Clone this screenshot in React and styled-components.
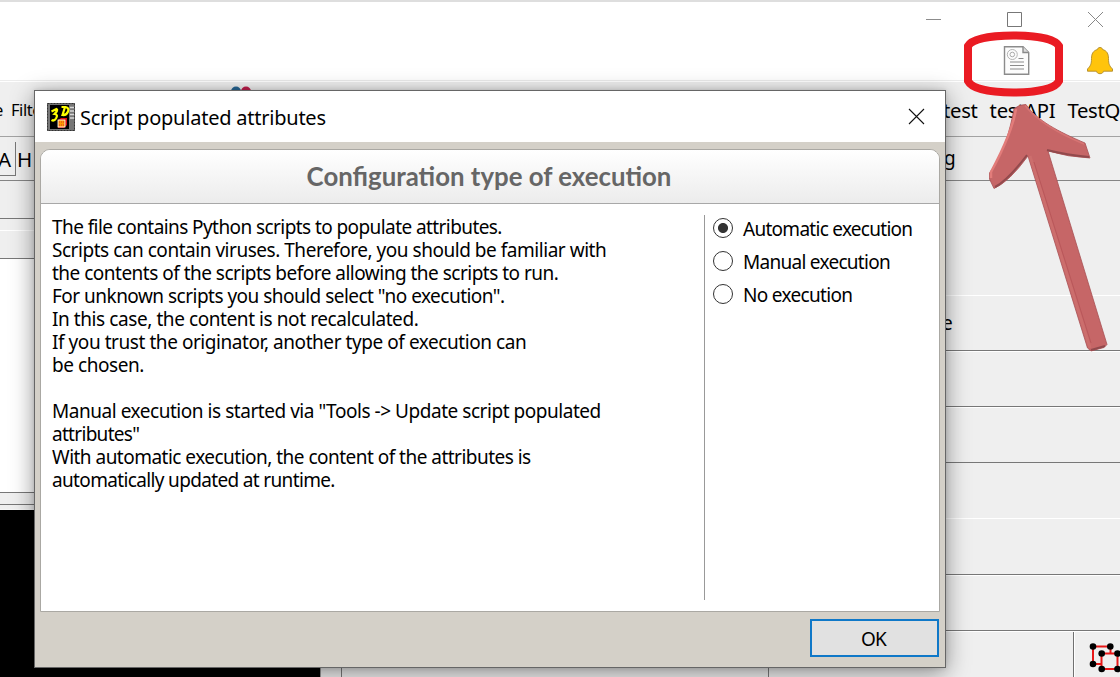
import React from "react";
import styled, { createGlobalStyle } from "styled-components";

const Global = createGlobalStyle`
  * { box-sizing: border-box; }
  html, body { margin: 0; background: #fff; overflow: hidden; }
  body { font-family: "Noto Sans", sans-serif; color: #000; }
`;

const Desktop = styled.main`
  position: relative;
  width: 1120px;
  height: 677px;
  overflow: hidden;
  display: flex;
  flex-direction: column;
  background: #efefef;
`;

const TopBar = styled.header`
  flex: 0 0 81px;
  background: #fff;
  border-top: 2px solid #dedede;
  border-bottom: 1px solid #ececec;
  display: flex;
  flex-direction: column;
`;

const Controls = styled.div`
  height: 36px;
  padding: 9px 16px 0 0;
  display: flex;
  justify-content: flex-end;
  gap: 64px;
`;

const Tools = styled.div`
  display: flex;
  justify-content: flex-end;
  align-items: flex-start;
  gap: 56px;
  padding: 7px 6px 0 0;
`;

const MenuBar = styled.nav`
  flex: 0 0 56px;
  border-top: 1px solid #fff;
  border-bottom: 1px solid #a3a3a3;
  display: flex;
  justify-content: space-between;
  overflow: hidden;
`;

const MenuSide = styled.div`
  width: ${(p) => p.$w}px;
  display: flex;
  gap: ${(p) => p.$gap}px;
  font-size: ${(p) => p.$size}px;
  letter-spacing: ${(p) => p.$track}px;
  line-height: 28px;
  padding-top: ${(p) => p.$top}px;
  margin-left: ${(p) => p.$shift || 0}px;
  white-space: nowrap;
  overflow: visible;
`;

const ToolRow = styled.div`
  flex: 0 0 44px;
  border-bottom: 1px solid #858585;
  display: flex;
  justify-content: space-between;
  font-size: 20.5px;
`;

const StyleKeys = styled.div`
  display: flex;
  padding-top: 5px;
  line-height: 34px;
`;

const Key = styled.span`
  width: 16px;
  height: 34px;
  padding-left: ${(p) => (p.$boxed ? 0 : 1)}px;
  text-indent: ${(p) => (p.$boxed ? -2 : 0)}px;
  border-right: ${(p) => (p.$boxed ? "1px solid #777" : "0")};
  border-bottom: ${(p) => (p.$boxed ? "1px solid #777" : "0")};
`;

const ToolTail = styled.div`
  width: 176px;
  line-height: 43px;
  font-size: 19px;
`;

const Workspace = styled.div`
  flex: 1;
  display: grid;
  grid-template-columns: 320px 465px 1fr;
`;

const Column = styled.div`
  display: flex;
  flex-direction: column;
`;

const Strip = styled.div`
  flex: 0 0 ${(p) => p.$h}px;
  background: ${(p) => p.$bg || "transparent"};
  border-bottom: 1px solid ${(p) => p.$line || "#777"};
  ${(p) => p.$glint && "border-top: 1px solid #fff;"}
  padding-left: 157px;
  font-size: 19px;
  line-height: 54px;
`;

const Viewport = styled.div`
  flex: 1;
  background: #000;
`;

const Gutter = styled.div`
  border-left: 1px solid #999;
  display: grid;
  grid-template-columns: 21px 427px 1fr;
  & > * { border-right: 1px solid #7b7b7b; }
`;

const Footer = styled.div`
  flex: 1;
  display: grid;
  grid-template-columns: 289px 1fr;
  border-top: 1px solid #fff;
  & > :first-child { border-right: 1px solid #707070; }
`;

const NodeCell = styled.div`
  padding: 10px 0 0 14px;
  overflow: hidden;
  border-left: 1px solid #fff;
`;

const Dialog = styled.section`
  position: absolute;
  left: 34px;
  top: 90px;
  width: 912px;
  height: 578px;
  border: 1px solid #666;
  background: #d4d0c8;
  box-shadow: 0 5px 22px rgba(0, 0, 0, 0.42), 0 0 5px rgba(0, 0, 0, 0.12);
  display: flex;
  flex-direction: column;
`;

const DialogTitle = styled.div`
  flex: 0 0 51px;
  background: #fff;
  display: flex;
  align-items: center;
  padding: 0 20px 0 12px;
  font-size: 20px;
  letter-spacing: ${(p) => p.$track}px;
`;

const TitleText = styled.span`
  flex: 1;
  padding: 1px 0 0 5px;
`;

const Panel = styled.div`
  margin: 7px 5px 0;
  flex: 0 0 463px;
  border: 1px solid #aaa8a3;
  border-radius: 10px 10px 0 0;
  background: #fff;
  overflow: hidden;
  display: flex;
  flex-direction: column;
`;

const PanelHead = styled.h1`
  margin: 0;
  flex: 0 0 54px;
  display: flex;
  align-items: center;
  justify-content: center;
  border-bottom: 1px solid #a8a8a8;
  background: linear-gradient(#fff, #ececec);
  color: #666;
  font: 700 25.8px/53px Lato, sans-serif;
  padding-right: 2px;
`;

const PanelBody = styled.div`
  flex: 1;
  display: flex;
`;

const Message = styled.div`
  width: 663px;
  padding: 12px 0 0 11px;
  font-size: 19px;
  line-height: 23px;
`;

const Line = styled.div`
  height: 23px;
  white-space: nowrap;
  letter-spacing: ${(p) => p.$track}px;
`;

const Options = styled.div`
  margin: 11px 0;
  border-left: 1px solid #999;
  padding: 1px 0 0 8px;
  flex: 1;
`;

const Option = styled.label`
  height: 33px;
  display: flex;
  align-items: flex-start;
  gap: 10px;
  font-size: 19px;
  line-height: 26px;
  letter-spacing: ${(p) => p.$track}px;
  white-space: nowrap;
`;

const Radio = styled.span`
  flex: 0 0 20px;
  height: 20px;
  margin-top: 2px;
  border: 1px solid #333;
  border-radius: 50%;
  background: ${(p) => (p.$on ? "radial-gradient(circle, #333 0 4.6px, #fff 5.4px)" : "#fff")};
`;

const Actions = styled.div`
  display: flex;
  justify-content: flex-end;
  padding: 7px 6px 0 0;
`;

const OkButton = styled.button`
  width: 129px;
  height: 38px;
  padding: 1px 2px 0 0;
  border: 2px solid #0f78c8;
  border-radius: 0;
  background: #e1e1e1;
  color: #000;
  font: 19px "Noto Sans", sans-serif;
  letter-spacing: -0.8px;
`;

const Markup = styled.svg`
  position: absolute;
  left: 0;
  top: 0;
  pointer-events: none;
`;

const Peek = styled.svg`
  position: absolute;
  left: 226px;
  top: 86px;
`;

const lines = [
  ["The file contains Python scripts to populate attributes.", -0.58],
  ["Scripts can contain viruses. Therefore, you should be familiar with", -0.47],
  ["the contents of the scripts before allowing the scripts to run.", -0.51],
  ['For unknown scripts you should select "no execution".', -0.52],
  ["In this case, the content is not recalculated.", -0.42],
  ["If you trust the originator, another type of execution can", -0.44],
  ["be chosen.", -0.45],
  ["", 0],
  ['Manual execution is started via "Tools -> Update script populated', -0.46],
  ['attributes"', -0.7],
  ["With automatic execution, the content of the attributes is", -0.52],
  ["automatically updated at runtime.", -0.65],
];

const options = [
  ["Automatic execution", -0.72],
  ["Manual execution", -0.72],
  ["No execution", -0.68],
];

const WindowControls = () => (
  <Controls>
    <svg width="17" height="17" fill="none" stroke="#8c8c8c"><path d="M1 8.5h15" /></svg>
    <svg width="17" height="17" fill="none" stroke="#777"><path d="M1.5 1.5h14v14h-14z" /></svg>
    <svg width="17" height="17" fill="none" stroke="#888"><path d="M1 1l15 15M16 1L1 16" /></svg>
  </Controls>
);

const ScriptIcon = () => (
  <svg width="27" height="31" viewBox="0 0 27 31" fill="none" stroke="#8b8b8b">
    <path d="M1.500 1.700H20L25.700 7.500V29.300H1.500Z" fill="#fcfcfc" strokeWidth="1.400" />
    <path d="M20 1.700V7.500h5.700" fill="#ddd" strokeWidth="1.400" />
    <circle cx="9.300" cy="9.500" r="5" stroke="#b4b4b4" />
    <circle cx="9.300" cy="9.500" r="2.300" stroke="#aaa" />
    <path d="M15.500 13.500h5M7 17h14M7 20.500h14M7 24h14" strokeWidth="1.200" />
  </svg>
);

const BellIcon = () => (
  <svg width="28" height="30" viewBox="0 0 28 30">
    <path
      d="M14 2.500c1.700 0 2.300.8 2.500 2 4.500 1.200 6 4.500 6 9 0 5.500 1 7.500 4 10.500v2.200H17.500c-.4 1.700-1.700 2.500-3.500 2.500s-3.100-.8-3.500-2.500H1.500V24c3-3 4-5 4-10.500 0-4.500 1.500-7.800 6-9 .2-1.200.8-2 2.500-2z"
      fill="#ffc40c" stroke="#b08a2a" strokeWidth=".9" />
  </svg>
);

const AppIcon = () => (
  <svg width="28" height="28" viewBox="0 0 28 28">
    <rect width="28" height="28" fill="#777" />
    <rect x=".5" y=".5" width="27" height="27" fill="none" stroke="#333" strokeDasharray="2 1" />
    <rect x="3" y="2" width="19" height="24" fill="#000" />
    <path d="M23 4.500h4M23 8h4M23 11.500h4M23 15h4" stroke="#d8d8d8" strokeWidth="1.500" />
    <path d="M4.500 8.500l5-2.500q2 1-2 5 4 .5 1.500 4.500-2 3-4.500 1.500M14.500 4h4q4 1 2.500 4.500-1.500 4-5.500 3.500L18 4" fill="none" stroke="#ff0" strokeWidth="2.200" />
    <path d="M11 17l3-2h6v7l-3 3h-6z" fill="#d11" />
    <rect x="11" y="17" width="7" height="7" fill="#f90" stroke="#fff" strokeWidth=".8" />
    <path d="M12 19h5M12 22h5" stroke="#d33" strokeDasharray="1 1" />
  </svg>
);

const NodesIcon = () => (
  <svg width="36" height="34" viewBox="0 0 36 34">
    <g fill="none" stroke="#e81818" strokeWidth="2">
      <path d="M12.500 22H4V4.500h17.500V11" />
      <path d="M12.500 11.500h16V27h-16z" />
    </g>
    <g fill="#000">
      {[[4, 4.5], [21.3, 4.5], [4, 22], [12.7, 11.5], [28.5, 11.5], [12.7, 27], [28.5, 27]].map(([x, y]) => (
        <circle key={x + "-" + y} cx={x} cy={y} r="3.3" />
      ))}
    </g>
  </svg>
);

const Annotations = () => (
  <Markup width="1120" height="677" viewBox="0 0 1120 677">
    <path
      d="M968 46C972 39 990 35.500 1013.500 35.500S1055 39 1059 46V81C1055 89 1037 92.500 1013.500 92.500S972 89 968 81Z"
      fill="none" stroke="#ea1b23" strokeWidth="8" />
    <path
      d="M1014 109Q1019 104 1026 104.500C1036 120 1059 132 1085 143L1090 158Q1068 157 1048 151L1107 344.500L1104 347.500L1091 351L1087.500 348L1028 156Q1009 182 994 188.500L989.500 179V173C1004 153 1010 130 1014 109Z"
      fill="#c66667" stroke="#a85154" strokeWidth=".8" strokeLinejoin="round" />
    <path d="M1016 109Q1012 133 991 172V178" fill="none" stroke="#e27c7a" strokeWidth="2.500" />
    <path d="M1025 105.500C1037 121 1060 134 1084 144" fill="none" stroke="#d67473" strokeWidth="1.500" />
    <path d="M1089 157Q1067 155 1047 150M995 187Q1008 180 1027 155" fill="none" stroke="#924a4d" strokeWidth="2" />
    <path d="M1030 156L1090 348" fill="none" stroke="#cc6e6d" strokeWidth="3" />
    <path d="M1034 162L1091 343" fill="none" stroke="#b9575a" strokeWidth="1" />
    <path d="M1091 350L1105 346" fill="none" stroke="#924a4d" strokeWidth="2" />
  </Markup>
);

export default function App() {
  return (
    <Desktop>
      <Global />
      <TopBar>
        <WindowControls />
        <Tools>
          <ScriptIcon />
          <BellIcon />
        </Tools>
      </TopBar>
      <MenuBar>
        <MenuSide $w={60} $gap={8} $size={16.5} $track={-0.4} $top={14} $shift={-6}>
          <span>e</span>
          <span>Filter</span>
        </MenuSide>
        <MenuSide $w={177} $gap={12} $size={20.3} $track={-0.3} $top={14}>
          <span>test</span>
          <span>testAPI</span>
          <span>TestQ</span>
        </MenuSide>
      </MenuBar>
      <ToolRow>
        <StyleKeys>
          <Key $boxed>A</Key>
          <Key>H</Key>
        </StyleKeys>
        <ToolTail>g</ToolTail>
      </ToolRow>
      <Workspace>
        <Column>
          <Strip $h={38} />
          <Strip $h={12} $line="#fff" />
          <Strip $h={28} />
          <Strip $h={234} $bg="#fff" />
          <Strip $h={12} />
          <Strip $h={5} $line="#f4f4f4" />
          <Viewport />
        </Column>
        <Gutter>
          <div />
          <div />
        </Gutter>
        <Column>
          <Strip $h={115} $line="#fff" />
          <Strip $h={55}>e</Strip>
          <Strip $h={56} $glint />
          <Strip $h={56} $glint />
          <Strip $h={56} $line="#fff" />
          <Strip $h={56} />
          <Strip $h={56} $glint />
          <Footer>
            <div />
            <NodeCell><NodesIcon /></NodeCell>
          </Footer>
        </Column>
      </Workspace>
      <Peek width="30" height="6">
        <circle cx="10" cy="5.500" r="5" fill="#286795" />
        <circle cx="20" cy="5.500" r="5" fill="#bf1d4b" />
      </Peek>
      <Dialog>
        <DialogTitle $track={-0.23}>
          <AppIcon />
          <TitleText>Script populated attributes</TitleText>
          <svg width="17" height="17" fill="none" stroke="#111" strokeWidth="1.1"><path d="M1 1l15 15M16 1L1 16" /></svg>
        </DialogTitle>
        <Panel>
          <PanelHead>Configuration type of execution</PanelHead>
          <PanelBody>
            <Message>
              {lines.map(([text, track], i) => (
                <Line key={i} $track={track}>{text}</Line>
              ))}
            </Message>
            <Options>
              {options.map(([text, track], i) => (
                <Option key={text} $track={track}>
                  <Radio $on={i === 0} />
                  {text}
                </Option>
              ))}
            </Options>
          </PanelBody>
        </Panel>
        <Actions>
          <OkButton>OK</OkButton>
        </Actions>
      </Dialog>
      <Annotations />
    </Desktop>
  );
}
